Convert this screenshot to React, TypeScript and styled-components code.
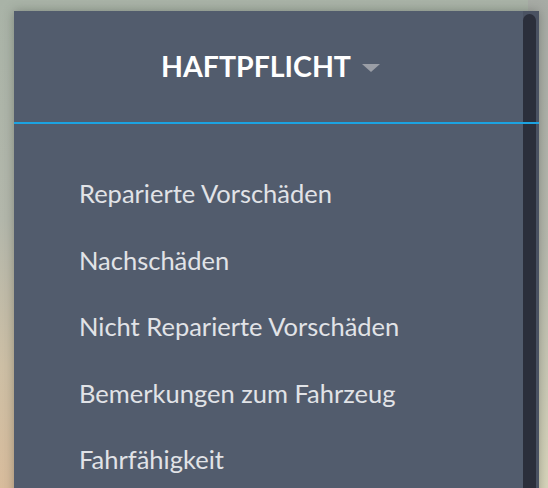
import React from 'react';
import styled, { createGlobalStyle } from 'styled-components';

const GlobalStyle = createGlobalStyle`
  html, body { margin: 0; padding: 0; height: 100%; overflow: hidden; }
  body {
    font-family: "Lato", "Noto Sans", sans-serif;
    background: linear-gradient(180deg, #a9b3a7 0%, #b3b7ab 45%, #cdbfa5 75%, #d8bc9c 100%);
  }
  #root { height: 100%; }
`;

const Backdrop = styled.div`
  position: relative;
  height: 100%;
  padding: 11px 9px 0 14px;
  box-sizing: border-box;
`;

const RightGlow = styled.div`
  position: absolute;
  top: 0;
  right: 0;
  width: 20px;
  height: 100%;
  background: linear-gradient(180deg, #a7aba5 0%, #b6b8ad 50%, #d8d5bb 100%);
`;

const Panel = styled.div`
  position: relative;
  height: 520px;
  background: #525c6d;
  box-shadow: 0 0 10px rgba(40, 45, 40, 0.35);
  padding-right: 16px;
  z-index: 1;
`;

const Header = styled.div`
  position: relative;
  z-index: 2;
  height: 111px;
  display: flex;
  align-items: center;
  justify-content: center;
  gap: 11px;
  padding-left: 4px;
  margin-right: -16px;
  padding-right: 16px;
  border-bottom: 2px solid #1ca3e1;
`;

const Title = styled.span`
  font-family: "Lato", "Noto Sans", sans-serif;
  font-weight: 700;
  font-size: 28.5px;
  color: #ffffff;
  line-height: 1;
`;

const Caret = styled.span`
  display: block;
  width: 0;
  height: 0;
  margin-top: 2px;
  border-left: 9px solid transparent;
  border-right: 9px solid transparent;
  border-top: 8px solid #9a9ea6;
`;

const List = styled.ul`
  list-style: none;
  margin: 0;
  padding: 36px 0 0 65px;
`;

const Item = styled.li`
  font-family: "Lato", "Noto Sans", sans-serif;
  font-size: 25.5px;
  line-height: 30px;
  padding: 18.25px 0;
  color: #e1e3e7;
`;

const Track = styled.div`
  position: absolute;
  top: 0;
  right: 0;
  width: 16px;
  height: 100%;
  background: #4a5262;
`;

const Thumb = styled.div`
  position: absolute;
  top: 3px;
  left: 0;
  width: 13px;
  height: 700px;
  border-radius: 7px;
  background: #2b2f3b;
`;

const items = [
  'Reparierte Vorschäden',
  'Nachschäden',
  'Nicht Reparierte Vorschäden',
  'Bemerkungen zum Fahrzeug',
  'Fahrfähigkeit',
];

export default function App() {
  return (
    <>
      <GlobalStyle />
      <Backdrop>
        <RightGlow />
        <Panel>
          <Track>
            <Thumb />
          </Track>
          <Header>
            <Title>HAFTPFLICHT</Title>
            <Caret />
          </Header>
          <List>
            {items.map((t) => (
              <Item key={t}>{t}</Item>
            ))}
          </List>
        </Panel>
      </Backdrop>
    </>
  );
}
